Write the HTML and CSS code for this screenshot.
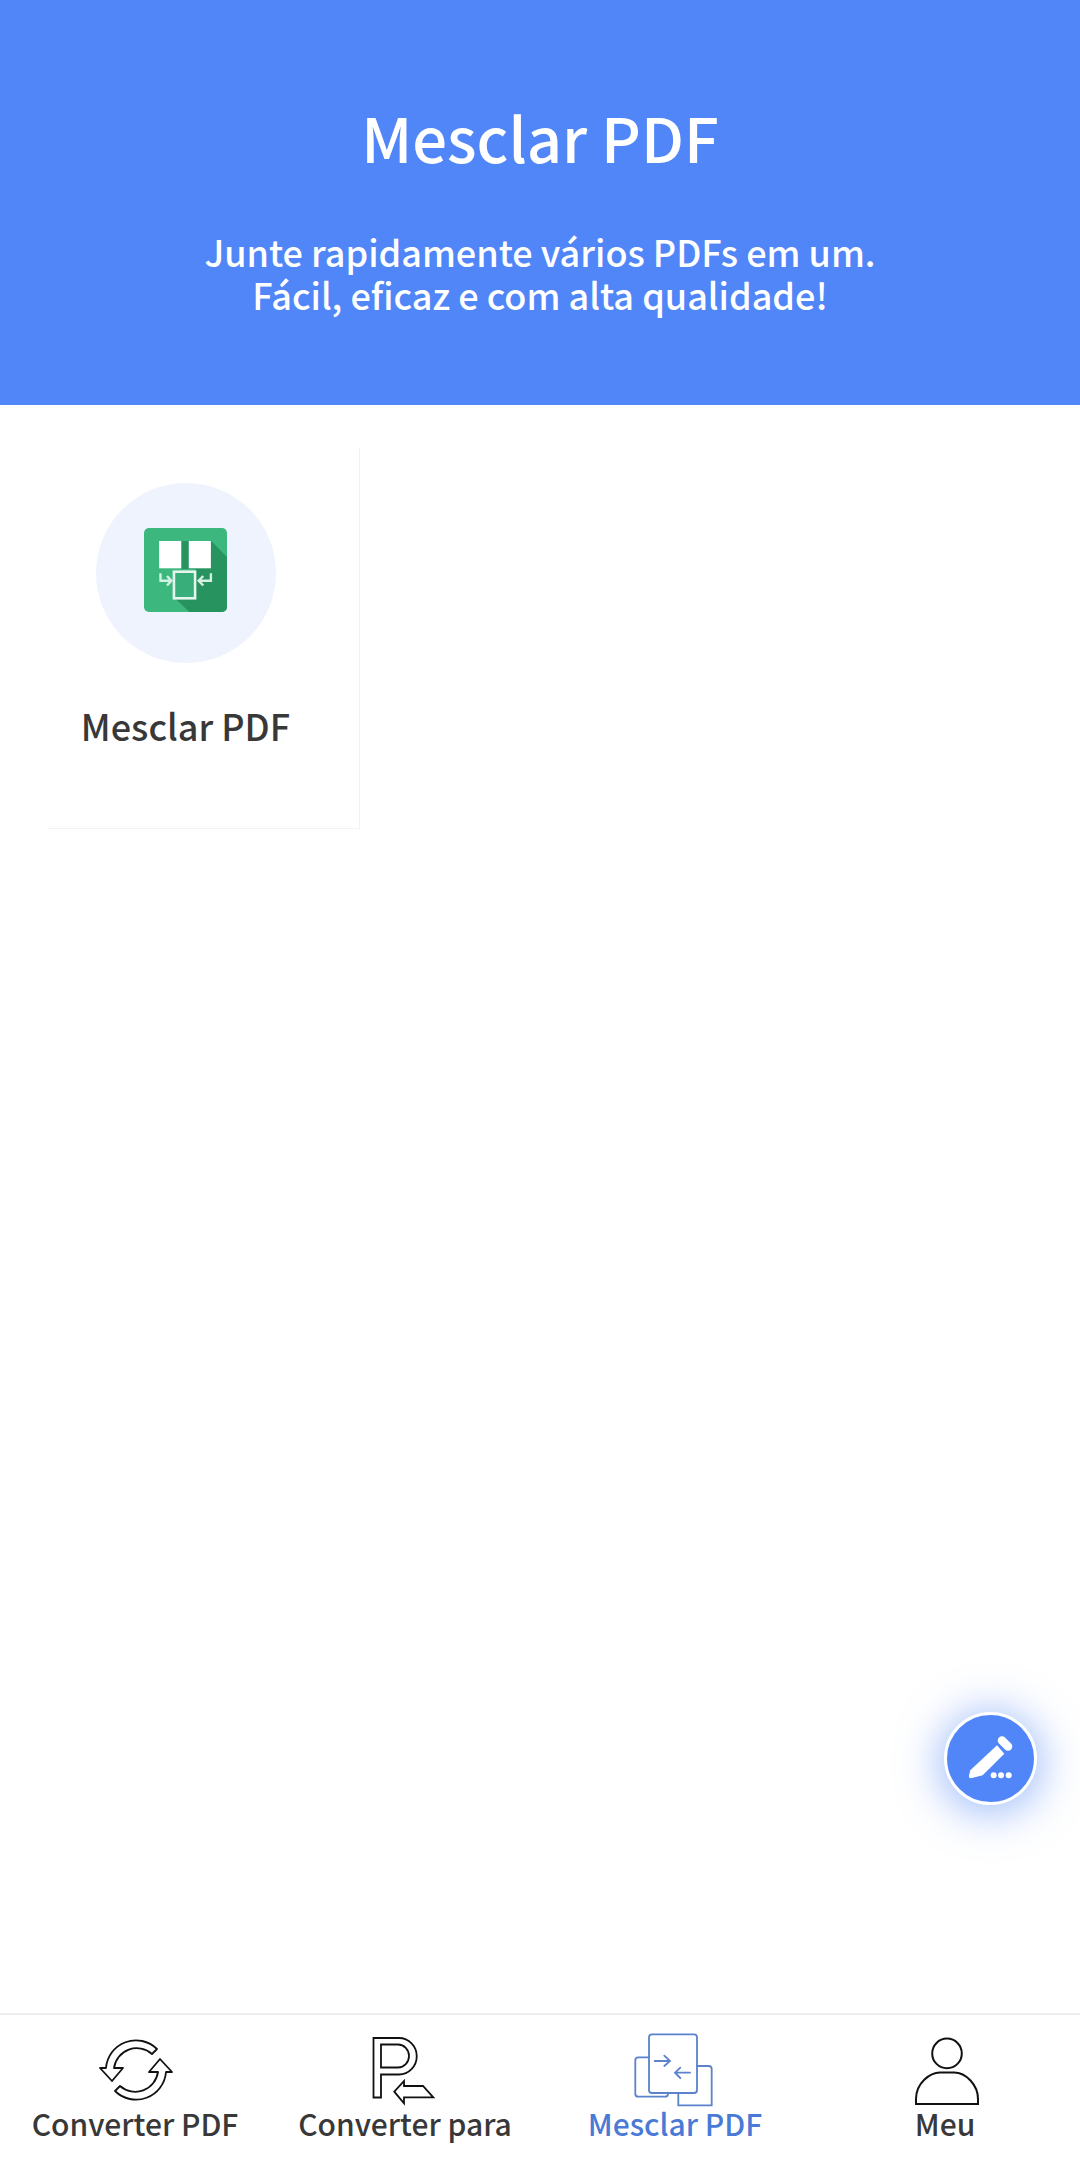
FILE: index.html
```html
<!DOCTYPE html>
<html lang="pt">
<head>
<meta charset="utf-8">
<title>Mesclar PDF</title>
<link rel="stylesheet" href="styles.css">
</head>
<body>
<div class="app">
  <header class="hero">
    <h1 class="hero-title">Mesclar PDF</h1>
    <p class="hero-sub">Junte rapidamente vários PDFs em um.<br>Fácil, eficaz e com alta qualidade!</p>
  </header>
  <main class="content">
    <section class="tool-grid">
      <div class="tool-card">
        <div class="tool-circle">
          <svg class="tool-icon" viewBox="0 0 84 84" preserveAspectRatio="none">
            <rect width="84" height="84" rx="5" fill="#3cb87f"/>
            <path d="M37.7 13H68L84 29V79a5 5 0 0 1-5 5H46L31 70H52V41H37.7Z" fill="#27935f"/>
            <rect x="15.3" y="13" width="22.4" height="27.3" fill="#fff"/>
            <rect x="45.3" y="13" width="22.4" height="27.3" fill="#fff"/>
            <rect x="30.3" y="43.7" width="21.4" height="26.6" fill="#38ae7a" stroke="#e6f6ee" stroke-width="2.6"/>
            <path d="M16.7 45.3V52.7H27M23.3 48L27.7 52.7L23.3 57.5" fill="none" stroke="#d5f1e4" stroke-width="2.4"/>
            <path d="M67.7 45.3V52.7H57M60 48L55.3 52.7L60 57.5" fill="none" stroke="#d5f1e4" stroke-width="2.4"/>
          </svg>
        </div>
        <div class="tool-name">Mesclar PDF</div>
      </div>
    </section>
  </main>
  <button class="fab" type="button" aria-label="Editar">
    <svg class="fab-icon" viewBox="0 0 92 92">
      <path d="M25.3 57.3L52 32.3L59.3 40.7L37.7 62.3L27 65Q23.5 65.8 24 62.5Z" fill="#fff"/>
      <line x1="57" y1="27.5" x2="63" y2="33.5" stroke="#fff" stroke-width="8.5" stroke-linecap="round"/>
      <circle cx="48.7" cy="62.3" r="3" fill="#fff"/>
      <circle cx="56" cy="62.3" r="3" fill="#fff"/>
      <circle cx="63.7" cy="62.3" r="3" fill="#fff"/>
    </svg>
  </button>
  <nav class="tabbar">
    <div class="tab">
      <svg class="tab-icon" viewBox="0 0 110 90">
        <g fill="#fff" stroke="#111" stroke-width="1.8" stroke-linejoin="round">
          <path d="M77 24A30 30 0 0 0 26 43H20L32 56L43 43H34A23 23 0 0 1 72 29Z"/>
          <path d="M35 66A30 30 0 0 0 86 47H92L80 34L69 47H78A23 23 0 0 1 40 61Z"/>
        </g>
      </svg>
      <span class="tab-label">Converter PDF</span>
    </div>
    <div class="tab">
      <svg class="tab-icon" viewBox="-5 0 110 90">
        <g fill="none" stroke="#111" stroke-width="1.8">
          <path d="M18.5 13H44A17.5 18 0 0 1 44 49.5H26V72.5H18.5ZM26 19.5V42.5H43A11 11.5 0 0 0 43 19.5Z"/>
          <path d="M39.3 66.7L49 56V61H68L78.3 72.3H49V78.3Z"/>
        </g>
      </svg>
      <span class="tab-label">Converter para</span>
    </div>
    <div class="tab tab-active">
      <svg class="tab-icon" viewBox="0 0 110 90">
        <g fill="none" stroke="#5b82cb" stroke-width="1.8" stroke-linecap="round">
          <rect x="29" y="9.3" width="48" height="58.7" rx="3"/>
          <path d="M29 32.3H18.3a3 3 0 0 0-3 3V68.7a3 3 0 0 0 3 3H45a3 3 0 0 0 3-3V68"/>
          <path d="M77 41H88.7a3 3 0 0 1 3 3V80.3H58.3V68"/>
          <path d="M34.7 36H50M44.3 30.7L50 36L44.3 41"/>
          <path d="M70 47.7H55M60.3 42.7L55 47.7L60.3 53"/>
        </g>
      </svg>
      <span class="tab-label">Mesclar PDF</span>
    </div>
    <div class="tab">
      <svg class="tab-icon" viewBox="0 0 110 90">
        <g fill="none" stroke="#111" stroke-width="2">
          <circle cx="57" cy="28.4" r="14.8"/>
          <path d="M26 79V74C26 58 40 47.5 50 47.5H64C76 47.5 88 60 88 74V79Z"/>
        </g>
      </svg>
      <span class="tab-label">Meu</span>
    </div>
  </nav>
</div>
</body>
</html>
```
FILE: styles.css
```css
* { box-sizing: border-box; }
html, body { margin: 0; padding: 0; background: #fff; }
body { font-family: "Noto Sans CJK SC", "Noto Sans", sans-serif; color: #333; }
.app { position: relative; width: 1080px; height: 2159px; display: flex; flex-direction: column; overflow: hidden; }
.hero { height: 405px; background: #5086f8; color: #fff; display: flex; flex-direction: column; align-items: center; padding-top: 93px; text-align: center; }
.hero-title { margin: 0; font-size: 61.5px; line-height: 88px; font-weight: 500; }
.hero-sub { margin: 49px 0 0; font-size: 36px; line-height: 43px; font-weight: 500; }
.content { flex: 1; }
.tool-grid { display: grid; grid-template-columns: 360px; padding-top: 43px; }
.tool-card { position: relative; height: 381px; padding: 35px 0 0 12px; display: flex; flex-direction: column; align-items: center; border-right: 1px solid #f2f2f2; }
.tool-card::after { content: ""; position: absolute; left: 48px; right: 0; bottom: 0; height: 1px; background: #f2f2f2; }
.tool-circle { width: 180px; height: 180px; padding-bottom: 6px; border-radius: 50%; background: #eef3fd; display: flex; align-items: center; justify-content: center; }
.tool-icon { width: 83px; height: 84px; display: block; }
.tool-name { margin-top: 36px; font-size: 36px; line-height: 52px; font-weight: 500; color: #383838; }
.fab { position: absolute; right: 43px; bottom: 354px; width: 93px; height: 93px; padding: 0; border: 3px solid #fff; border-radius: 50%; background: #5086f8; box-shadow: 0 4px 40px 6px rgba(80, 134, 248, .5); display: flex; align-items: center; justify-content: center; }
.fab-icon { width: 92px; height: 92px; display: block; flex: none; }
.tabbar { height: 146px; border-top: 2px solid #eee; display: grid; grid-template-columns: repeat(4, 270px); padding-top: 10px; background: #fff; }
.tab { display: flex; flex-direction: column; align-items: center; }
.tab-icon { width: 110px; height: 90px; display: block; }
.tab-label { margin-top: -14px; font-size: 30px; line-height: 44px; font-weight: 500; color: #383838; }
.tab-active .tab-label { color: #4a7ad6; }
```
